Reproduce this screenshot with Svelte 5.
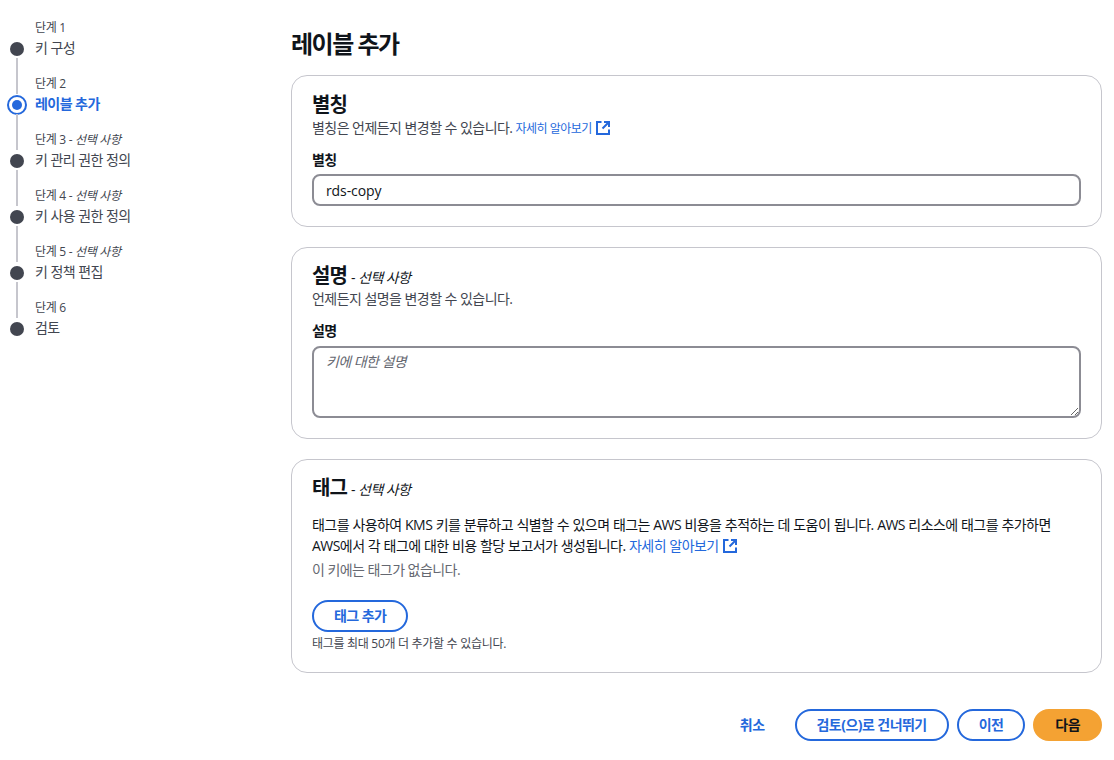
<script>
  const steps = [
    { n: 1, name: '키 구성' },
    { n: 2, name: '레이블 추가', active: true },
    { n: 3, name: '키 관리 권한 정의', optional: true },
    { n: 4, name: '키 사용 권한 정의', optional: true },
    { n: 5, name: '키 정책 편집', optional: true },
    { n: 6, name: '검토' }
  ];
</script>

{#snippet external()}
  <svg class="ext" width="16" height="16" viewBox="0 0 16 16" fill="none">
    <path d="M6.5 2H2v12h12V9.5" />
    <path d="M9 2h5v5M14 2 7.5 8.5" />
  </svg>
{/snippet}

<div class="page">
  <nav class="nav">
    {#each steps as step, i}
      <div class="step">
        <div class="rail">
          <span class="dot" class:active={step.active}></span>
          {#if i < steps.length - 1}<span class="line"></span>{/if}
        </div>
        <div class="step-text">
          <div class="step-no">단계 {step.n}{#if step.optional}{' '}- <i>선택 사항</i>{/if}</div>
          <div class="step-name" class:active={step.active}>{step.name}</div>
        </div>
      </div>
    {/each}
  </nav>

  <main class="main">
    <h1>레이블 추가</h1>

    <section class="card">
      <h2>별칭</h2>
      <p class="desc">별칭은 언제든지 변경할 수 있습니다. <a class="small" href="#a">자세히 알아보기 {@render external()}</a></p>
      <label class="field-label" for="alias">별칭</label>
      <input id="alias" class="input" value="rds-copy" />
    </section>

    <section class="card">
      <h2 class="with-opt">설명 <span class="opt">- <i>선택 사항</i></span></h2>
      <p class="desc">언제든지 설명을 변경할 수 있습니다.</p>
      <label class="field-label area-label" for="description">설명</label>
      <textarea id="description" class="input area" placeholder="키에 대한 설명"></textarea>
    </section>

    <section class="card tags">
      <h2 class="with-opt">태그 <span class="opt">- <i>선택 사항</i></span></h2>
      <p class="tag-desc">태그를 사용하여 KMS 키를 분류하고 식별할 수 있으며 태그는 AWS 비용을 추적하는 데 도움이 됩니다. AWS 리소스에 태그를 추가하면 AWS에서 각 태그에 대한 비용 할당 보고서가 생성됩니다. <a href="#b">자세히 알아보기 {@render external()}</a></p>
      <p class="empty">이 키에는 태그가 없습니다.</p>
      <button class="btn add">태그 추가</button>
      <p class="hint">태그를 최대 50개 더 추가할 수 있습니다.</p>
    </section>

    <div class="actions">
      <button class="btn link">취소</button>
      <button class="btn skip">검토(으)로 건너뛰기</button>
      <button class="btn prev">이전</button>
      <button class="btn primary">다음</button>
    </div>
  </main>
</div>

<style>
  :global(body) {
    background: #fff;
    color: #0f141a;
    font-family: "Open Sans", "Noto Sans CJK KR", sans-serif;
    font-size: 14px;
    line-height: 20px;
    letter-spacing: -0.55px;
  }
  .page {
    display: grid;
    grid-template-columns: 291px 811px;
    height: 760px;
    overflow: hidden;
  }

  .nav { padding-top: 19px; }
  .step { display: flex; height: 56px; }
  .rail {
    position: relative;
    width: 35px;
    flex: none;
  }
  .dot {
    position: absolute;
    left: 10px;
    top: 23px;
    width: 14px;
    height: 14px;
    border-radius: 50%;
    background: #424650;
  }
  .dot.active {
    left: 7px;
    top: 20px;
    width: 20px;
    height: 20px;
    box-sizing: border-box;
    border: 2px solid #2468dc;
    background: #fff;
  }
  .dot.active::after {
    content: '';
    position: absolute;
    left: 3px;
    top: 3px;
    width: 10px;
    height: 10px;
    border-radius: 50%;
    background: #2468dc;
  }
  .line {
    position: absolute;
    left: 16px;
    top: 39px;
    width: 2px;
    height: 36px;
    background: #c6c6cd;
  }
  .step-no { font-size: 12px; line-height: 18px; color: #424650; letter-spacing: -0.3px; }
  .step-name { margin-top: 1px; color: #424650; }
  .step-name.active { color: #2468dc; font-weight: 700; }

  h1 {
    margin: 27px 0 15px;
    font-size: 24px;
    line-height: 33px;
    font-weight: 700;
    letter-spacing: -1.5px;
  }
  .card {
    box-sizing: border-box;
    border: 1px solid #c6c6cd;
    border-radius: 16px;
    padding: 15px 20px 20px;
    margin-bottom: 20px;
  }
  h2 {
    margin: 0;
    height: 27px;
    font-size: 20px;
    line-height: 27px;
    font-weight: 700;
    letter-spacing: -1px;
  }
  h2.with-opt { height: 26px; line-height: 26px; }
  .opt { font-size: 14px; line-height: 14px; font-weight: 400; letter-spacing: -0.55px; }
  .desc { margin: 0; line-height: 20px; color: #424650; }
  a { color: #2468dc; text-decoration: none; }
  .small { font-size: 12px; letter-spacing: -0.5px; }
  .ext {
    display: inline-block;
    vertical-align: -3px;
  }
  .ext path { stroke: #2468dc; stroke-width: 2; }
  .field-label {
    display: block;
    margin-top: 12px;
    margin-bottom: 5px;
    font-weight: 700;
    font-size: 14px;
    line-height: 18px;
    height: 18px;
  }
  .area-label { margin-top: 13px; margin-bottom: 6px; }
  .input {
    display: block;
    box-sizing: border-box;
    width: 100%;
    height: 32px;
    padding: 4px 12px;
    border: 2px solid #8c8c94;
    border-radius: 8px;
    font: inherit;
    letter-spacing: -0.1px;
    color: #0f141a;
    background: #fff;
    outline: none;
  }
  .area { height: 72px; letter-spacing: -0.55px; }
  .area::placeholder { color: #656871; font-style: italic; }

  .tag-desc { margin: 13px 0 0; line-height: 21px; max-width: 745px; word-spacing: 0.3px; }
  .empty { margin: 3px 0 0; color: #656871; line-height: 21px; }
  .btn {
    box-sizing: border-box;
    height: 32px;
    border: 2px solid #2468dc;
    border-radius: 16px;
    padding: 0 20px;
    background: #fff;
    color: #2468dc;
    font: inherit;
    letter-spacing: -0.55px;
    font-weight: 700;
  }
  .add { display: block; margin-top: 20px; }
  .hint { margin: 3px 0 0; font-size: 12px; line-height: 18px; color: #424650; letter-spacing: -0.3px; }
  .tags { padding-bottom: 19px; }
  .actions {
    display: flex;
    justify-content: flex-end;
    gap: 8px;
    margin-top: 36px;
  }
  .link { border-color: transparent; }
  .primary { background: #f4a233; border-color: #f4a233; color: #0f141a; }
</style>
